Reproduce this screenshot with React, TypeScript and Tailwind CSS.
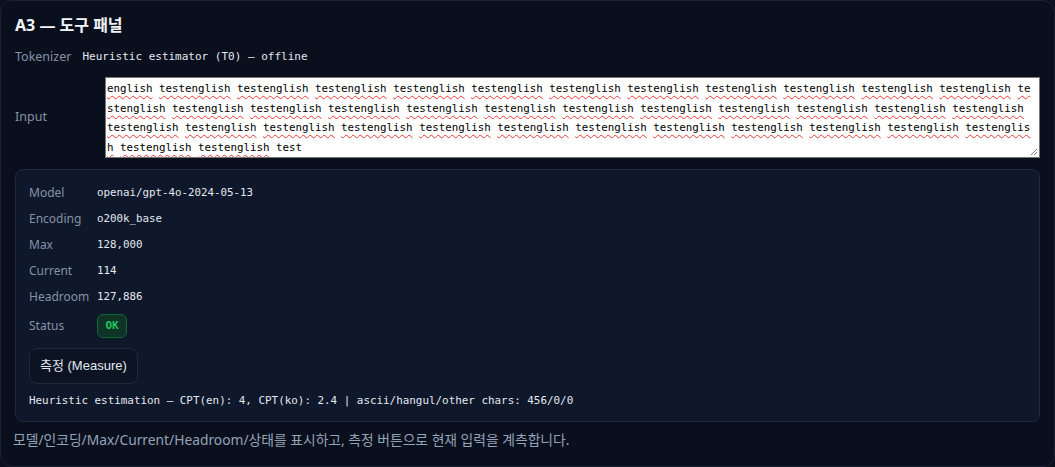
import React from 'react';

// フォント定義
const sans = { fontFamily: '"Noto Sans", "Noto Sans CJK KR", sans-serif' };
const mono = { fontFamily: '"DejaVu Sans Mono", "Liberation Mono", monospace' };
const btnFont = { fontFamily: '"Liberation Sans", "Noto Sans CJK KR", sans-serif' };

// 入力欄の表示行（スクロール後の見え方）
const W = 'testenglish';
const inputLines: string[][] = [
  ['english', ...Array(11).fill(W), 'te'],
  ['stenglish', ...Array(11).fill(W)],
  [...Array(11).fill(W), 'testenglis'],
  ['h', W, W, 'test'],
];

const stats = [
  { label: 'Model', value: 'openai/gpt-4o-2024-05-13' },
  { label: 'Encoding', value: 'o200k_base' },
  { label: 'Max', value: '128,000' },
  { label: 'Current', value: '114' },
  { label: 'Headroom', value: '127,886' },
];

function InputBox() {
  return (
    <div
      role="textbox"
      className="relative flex-1 h-[81px] bg-white border border-[#767676] pl-[1px] pt-[1px] overflow-hidden text-[10.8px] leading-[19.5px] text-black"
      style={mono}
    >
      {inputLines.map((words, i) => (
        <div key={i} className="whitespace-pre">
          {words.map((w, j) => (
            <React.Fragment key={j}>
              {j > 0 && ' '}
              {w === 'test' ? (
                <span>{w}</span>
              ) : (
                <span className="underline decoration-wavy decoration-[#e53935] decoration-[1px] underline-offset-[3px]">
                  {w}
                </span>
              )}
            </React.Fragment>
          ))}
        </div>
      ))}
      <svg className="absolute right-[1px] bottom-[1px]" width="9" height="9" viewBox="0 0 9 9">
        <path d="M8 2 L2 8 M8 5 L5 8" stroke="#7a7a7a" strokeWidth="1" />
      </svg>
    </div>
  );
}

export default function App() {
  return (
    <div className="w-[1055px] h-[467px] bg-[#0a0f1c]">
      <div
        className="h-full rounded-xl border border-[#1a2233] bg-[#0a0f1e] px-[14px] pt-[12px]"
        style={sans}
      >
        <h2 className="h-[24px] leading-[24px] text-[16px] font-bold text-[#f1f5f9]">A3 — 도구 패널</h2>

        <div className="mt-[10px] flex items-center gap-[11px] h-[20px]">
          <span className="text-[12.5px] text-[#8592a6]">Tokenizer</span>
          <span className="text-[11px] font-medium text-[#e2e8f0]" style={mono}>
            Heuristic estimator (T0) — offline
          </span>
        </div>

        <div className="mt-[10px] flex items-center">
          <span className="w-[90px] text-[12.5px] text-[#8592a6]">Input</span>
          <InputBox />
        </div>

        <div className="mt-[11px] rounded-lg border border-[#1e293b] bg-[#0f172a] px-[13px] pt-[10px] pb-[11px]">
          {stats.map((s) => (
            <div key={s.label} className="flex items-center h-[26px]">
              <span className="w-[68px] text-[12px] text-[#8592a6]">{s.label}</span>
              <span className="text-[10.8px] text-[#e2e8f0]" style={mono}>
                {s.value}
              </span>
            </div>
          ))}
          <div className="flex items-center h-[32px]">
            <span className="w-[68px] text-[12px] text-[#8592a6]">Status</span>
            <span
              className="inline-flex items-center justify-center w-[30px] h-[24px] rounded-md border border-[#166534] bg-[#0f3326] text-[11px] font-bold text-[#22c55e]"
              style={mono}
            >
              OK
            </span>
          </div>
          <button
            className="mt-[6px] h-[36px] px-[10px] rounded-lg border border-[#1e293b] bg-[#0c1322] text-[13px] text-[#e2e8f0]"
            style={btnFont}
          >
            측정 (Measure)
          </button>
          <div className="mt-[8px] h-[18px] leading-[18px] text-[10.9px] text-[#e2e8f0]" style={mono}>
            Heuristic estimation — CPT(en): 4, CPT(ko): 2.4 | ascii/hangul/other chars: 456/0/0
          </div>
        </div>

        <p className="mt-[9px] -ml-[2px] h-[18px] leading-[18px] text-[13.8px] text-[#94a3b8]">
          모델/인코딩/Max/Current/Headroom/상태를 표시하고, 측정 버튼으로 현재 입력을 계측합니다.
        </p>
      </div>
    </div>
  );
}
